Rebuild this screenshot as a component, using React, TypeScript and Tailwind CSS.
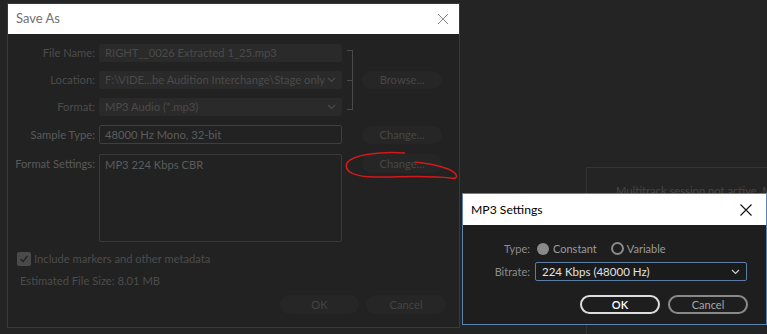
import React from "react";

const Chevron = ({ color }: { color: string }) => (
  <svg width="9" height="6" viewBox="0 0 9 6" className="shrink-0">
    <polyline points="1,1 4.5,4.5 8,1" fill="none" stroke={color} strokeWidth="1.2" />
  </svg>
);

function SaveAs() {
  return (
    <div className="w-[453px] h-[325px] shrink-0 border border-[#3a3a3a] bg-[#222222] flex flex-col">
      <div className="h-[30px] bg-white flex items-center justify-between pl-[8px] pr-[10px] shrink-0">
        <span className="text-[13px] text-[#707070]">Save As</span>
        <svg width="12" height="12" viewBox="0 0 12 12">
          <path d="M1 1 L11 11 M11 1 L1 11" stroke="#8a8a8a" strokeWidth="1" />
        </svg>
      </div>
      <div className="flex flex-col pt-[10px] text-[11.2px] leading-[16px]">
        <div className="flex items-center">
          <div className="flex flex-col gap-[9px]">
            {[
              { l: "File Name:", v: "RIGHT__0026 Extracted 1_25.mp3", c: false },
              { l: "Location:", v: "F:\\VIDE...be Audition Interchange\\Stage only", c: true },
              { l: "Format:", v: "MP3 Audio (*.mp3)", c: true },
            ].map((r) => (
              <div key={r.l} className="flex items-center">
                <div className="w-[88px] text-right pr-[1px] text-[#4c4c4c] whitespace-nowrap">{r.l}</div>
                <div className="ml-[3px] w-[243px] h-[18px] bg-[#2a2a2a] rounded-[2px] flex items-center justify-between pl-[6px] pr-[6px] text-[#4a4a4a] whitespace-nowrap overflow-hidden">
                  <span>{r.v}</span>
                  {r.c && <Chevron color="#4a4a4a" />}
                </div>
              </div>
            ))}
          </div>
          <div className="ml-[5px] h-[60px] w-[6px] border-t border-b border-r border-[#4a4a4a] flex items-center">
            <div className="w-[6px] h-[1px] bg-[#4a4a4a]" />
          </div>
          <button className="ml-[9px] w-[80px] h-[18px] rounded-full bg-[#262626] text-[#474747]">Browse...</button>
        </div>
        <div className="flex items-center mt-[9px]">
          <div className="w-[88px] text-right pr-[1px] text-[#5a5a5a] whitespace-nowrap">Sample Type:</div>
          <div className="ml-[3px] w-[243px] h-[19px] border border-[#3e3e3e] rounded-[2px] flex items-center pl-[5px] text-[#5c5c5c]">
            48000 Hz Mono, 32-bit
          </div>
          <button className="ml-[20px] w-[80px] h-[18px] rounded-full bg-[#262626] text-[#474747]">Change...</button>
        </div>
        <div className="flex items-start mt-[10px]">
          <div className="w-[88px] text-right pr-[1px] pt-[2px] text-[#5a5a5a] whitespace-nowrap">Format Settings:</div>
          <div className="ml-[3px] w-[243px] h-[88px] border border-[#3a3a3a] rounded-[2px] pl-[5px] pt-[2px] text-[#5c5c5c]">
            MP3 224 Kbps CBR
          </div>
          <button className="ml-[20px] w-[80px] h-[19px] rounded-full bg-[#262626] text-[#474747]">Change...</button>
        </div>
        <div className="flex items-center mt-[9px] pl-[9px]">
          <div className="w-[14px] h-[14px] rounded-[2px] bg-[#4a4a4a] flex items-center justify-center">
            <svg width="10" height="10" viewBox="0 0 10 10">
              <polyline points="1.5,5 4,7.5 8.5,2" fill="none" stroke="#262626" strokeWidth="1.6" />
            </svg>
          </div>
          <span className="ml-[3px] text-[#4c4c4c]">Include markers and other metadata</span>
        </div>
        <div className="mt-[6px] pl-[12px] text-[#4c4c4c]">Estimated File Size: 8.01 MB</div>
        <div className="flex justify-end gap-[7px] pr-[13px] mt-[6px]">
          <button className="w-[79px] h-[19px] rounded-full bg-[#262626] text-[#444]">OK</button>
          <button className="w-[80px] h-[19px] rounded-full bg-[#262626] text-[#444]">Cancel</button>
        </div>
      </div>
    </div>
  );
}

function Mp3Dialog() {
  return (
    <div className="absolute left-[462px] top-[193px] w-[305px] h-[132px] border border-[#5c84b0] bg-[#1e1e1e] flex flex-col text-[11px] leading-[16px]">
      <div className="h-[31px] bg-white flex items-center justify-between pl-[8px] pr-[14px] shrink-0">
        <span className="text-[12.2px] text-black">MP3 Settings</span>
        <svg width="12" height="12" viewBox="0 0 12 12">
          <path d="M0.5 0.5 L11.5 11.5 M11.5 0.5 L0.5 11.5" stroke="#111" strokeWidth="1.1" />
        </svg>
      </div>
      <div className="flex flex-col pt-[15px]">
        <div className="flex items-center h-[17px]">
          <div className="w-[67px] text-right text-[#8c8c8c]">Type:</div>
          <div className="ml-[7px] w-[12px] h-[12px] rounded-full bg-[#8a8a8a]" />
          <span className="ml-[4px] text-[#9a9a9a]">Constant</span>
          <div className="ml-[14px] w-[13px] h-[13px] rounded-full border-2 border-[#8a8a8a]" />
          <span className="ml-[3px] text-[#9a9a9a]">Variable</span>
        </div>
        <div className="flex items-center mt-[5px]">
          <div className="w-[67px] text-right text-[#8c8c8c]">Bitrate:</div>
          <div className="ml-[5px] w-[212px] h-[19px] border border-[#5a7ea6] rounded-[2px] bg-[#1b1b1b] flex items-center justify-between pl-[6px] pr-[6px] text-[#e2e2e2] text-[11.5px]">
            <span>224 Kbps (48000 Hz)</span>
            <Chevron color="#cfcfcf" />
          </div>
        </div>
        <div className="flex justify-end gap-[8px] pr-[18px] mt-[14px]">
          <button className="w-[80px] h-[19px] rounded-full border-2 border-[#dedede] text-white font-semibold leading-[14px]">OK</button>
          <button className="w-[80px] h-[19px] rounded-full border-2 border-[#8a8a8a] text-[#a8a8a8] leading-[14px]">Cancel</button>
        </div>
      </div>
    </div>
  );
}

export default function App() {
  return (
    <div className="relative w-[767px] h-[334px] overflow-hidden bg-[#242424] font-['Lato',sans-serif]">
      <div className="flex pt-[3px] pl-[7px]">
        <SaveAs />
        <div className="ml-[126px] mt-[164px] flex-1 min-w-0 h-[200px] border-t border-l border-[#343434] pt-[16px] pl-[29px] overflow-hidden text-[11.2px] text-[#454545] leading-[14px]">
          <div className="whitespace-nowrap">Multitrack session not active. M</div>
          <div className="pl-[146px]">k</div>
        </div>
      </div>
      <svg className="absolute left-0 top-0 pointer-events-none" width="767" height="334">
        <path
          d="M 405 153 C 380 151, 352 155, 347 163 C 343 172, 356 177, 375 177 C 400 177, 430 175, 450 178 C 460 180, 458 173, 448 169 C 435 164, 425 163, 415 162"
          fill="none"
          stroke="#d11a1a"
          strokeWidth="1.6"
        />
      </svg>
      <Mp3Dialog />
    </div>
  );
}
